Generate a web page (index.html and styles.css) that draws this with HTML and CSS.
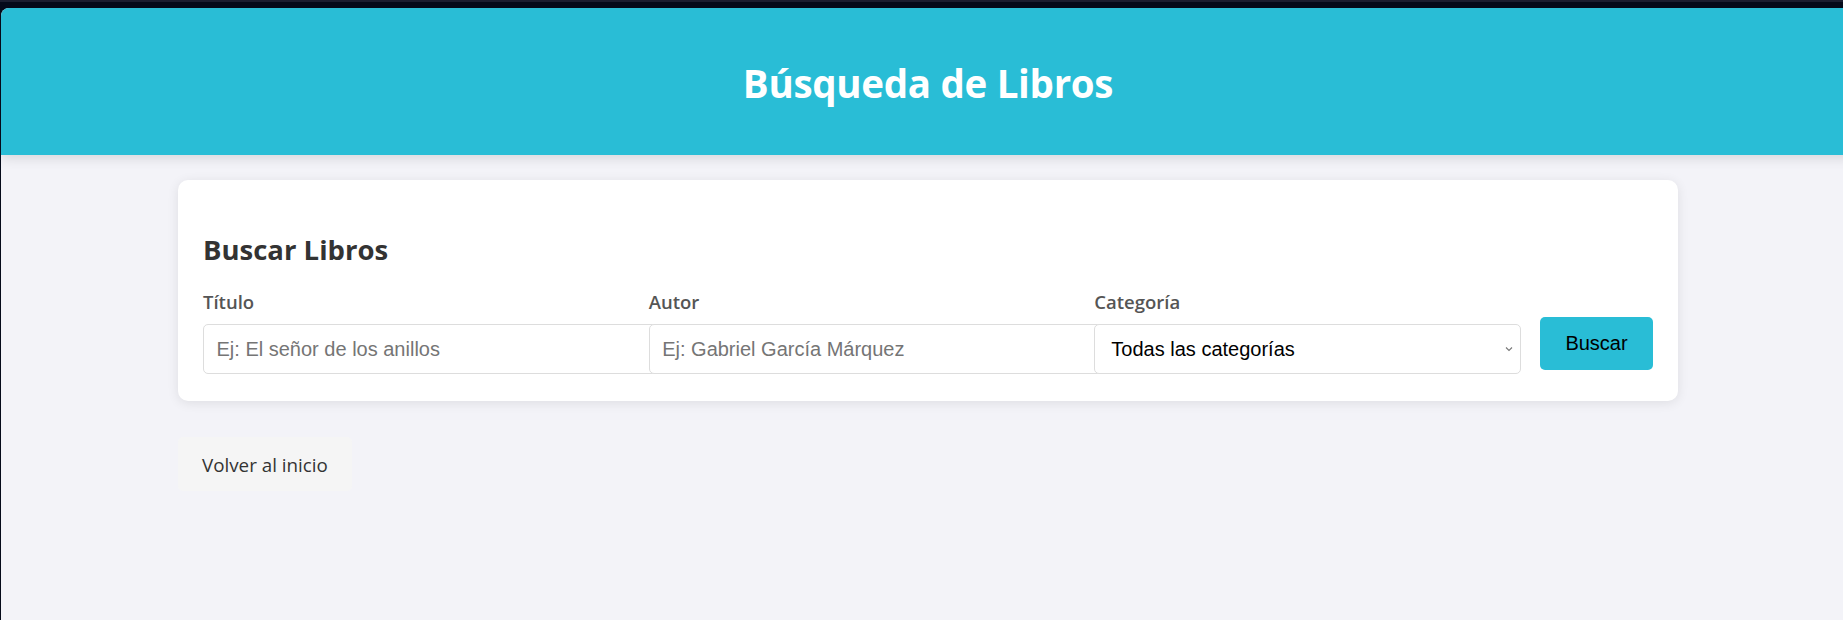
FILE: index.html
```html
<!DOCTYPE html>
<html lang="es">
<head>
<meta charset="utf-8">
<title>Búsqueda de Libros</title>
<link rel="stylesheet" href="styles.css">
</head>
<body>
<div class="frame">
  <div class="app">
    <header class="site-header">
      <h1 class="site-title">Búsqueda de Libros</h1>
    </header>
    <main class="container">
      <section class="card">
        <h2 class="card-title">Buscar Libros</h2>
        <form class="search-form">
          <div class="form-group">
            <label class="form-label" for="titulo">Título</label>
            <input class="form-input" id="titulo" type="text" placeholder="Ej: El señor de los anillos">
          </div>
          <div class="form-group">
            <label class="form-label" for="autor">Autor</label>
            <input class="form-input" id="autor" type="text" placeholder="Ej: Gabriel García Márquez">
          </div>
          <div class="form-group">
            <label class="form-label" for="categoria">Categoría</label>
            <div class="select-wrap">
              <select class="form-select" id="categoria">
                <option>Todas las categorías</option>
              </select>
              <svg class="select-arrow" width="8" height="6" viewBox="0 0 8 6" aria-hidden="true">
                <path d="M1 1.5 L4 4.5 L7 1.5" fill="none" stroke="#777777" stroke-width="1.1"/>
              </svg>
            </div>
          </div>
          <button class="btn-search" type="button">Buscar</button>
        </form>
      </section>
      <a class="back-link" href="#">Volver al inicio</a>
    </main>
  </div>
</div>
</body>
</html>
```

FILE: styles.css
```css
html, body {
  margin: 0;
  padding: 0;
  height: 100%;
  overflow: hidden;
  background: #050a1a;
}

.frame {
  height: 100%;
  padding-top: 8px;
  padding-left: 1px;
  box-sizing: border-box;
  background: linear-gradient(#1b1e30 0, #1b1e30 2px, #050a1a 2px);
}

.app {
  width: 1854px;
  height: 100%;
  background: #f3f3f8;
  border-top-left-radius: 8px;
  overflow: hidden;
  font-family: "Open Sans", "Noto Sans", sans-serif;
}

.site-header {
  height: 147px;
  background: #29bdd6;
  display: flex;
  align-items: center;
  justify-content: center;
  box-shadow: 0 3px 12px rgba(0, 0, 0, 0.12);
  position: relative;
}

.site-title {
  margin: 0;
  padding-top: 2px;
  color: #ffffff;
  font-size: 38.5px;
  font-weight: 700;
  line-height: 50px;
  letter-spacing: -0.3px;
}

.container {
  width: 1500px;
  margin: 25px auto 0;
}

.card {
  background: #ffffff;
  border-radius: 10px;
  padding: 25px 25px 27px;
  box-shadow: 0 2px 12px rgba(0, 0, 0, 0.09);
}

.card-title {
  margin: 25px 0 20px;
  font-size: 27.5px;
  line-height: 40px;
  font-weight: 700;
  color: #333333;
}

.search-form {
  display: flex;
  align-items: flex-end;
  gap: 19px;
}

.form-group {
  flex: 1 1 0;
  min-width: 0;
  display: flex;
  flex-direction: column;
}

.form-label {
  display: block;
  margin-bottom: 10px;
  font-size: 18.5px;
  line-height: 24px;
  font-weight: 600;
  color: #555555;
}

.form-input {
  box-sizing: content-box;
  width: 100%;
  margin: 0;
  padding: 13px 12.5px 12px;
  border: 1px solid #dddddd;
  border-radius: 5px;
  background: #ffffff;
  font-family: "Liberation Sans", Arial, sans-serif;
  font-size: 20px;
  line-height: 23px;
  color: #222222;
  outline: none;
}

.form-input::placeholder {
  color: #757575;
}

.select-wrap {
  position: relative;
}

.form-select {
  box-sizing: border-box;
  display: block;
  width: 100%;
  height: 50px;
  margin: 0;
  padding: 0 30px 0 16px;
  border: 1px solid #dddddd;
  border-radius: 5px;
  background: #ffffff;
  font-family: "Liberation Sans", Arial, sans-serif;
  font-size: 20px;
  color: #000000;
  appearance: none;
  -webkit-appearance: none;
}

.select-arrow {
  position: absolute;
  right: 8px;
  top: 22px;
  pointer-events: none;
}

.btn-search {
  flex: 0 0 auto;
  width: 113px;
  height: 53px;
  margin-bottom: 4px;
  padding: 0;
  border: none;
  border-radius: 5px;
  background: #29bdd6;
  color: #000000;
  font-family: "Liberation Sans", Arial, sans-serif;
  font-size: 20px;
}

.back-link {
  display: inline-block;
  margin-top: 36px;
  padding: 2px 24px 0;
  height: 52px;
  line-height: 52px;
  background: #f5f5f5;
  border-radius: 5px;
  color: #333333;
  font-size: 18.8px;
  text-decoration: none;
}
```
